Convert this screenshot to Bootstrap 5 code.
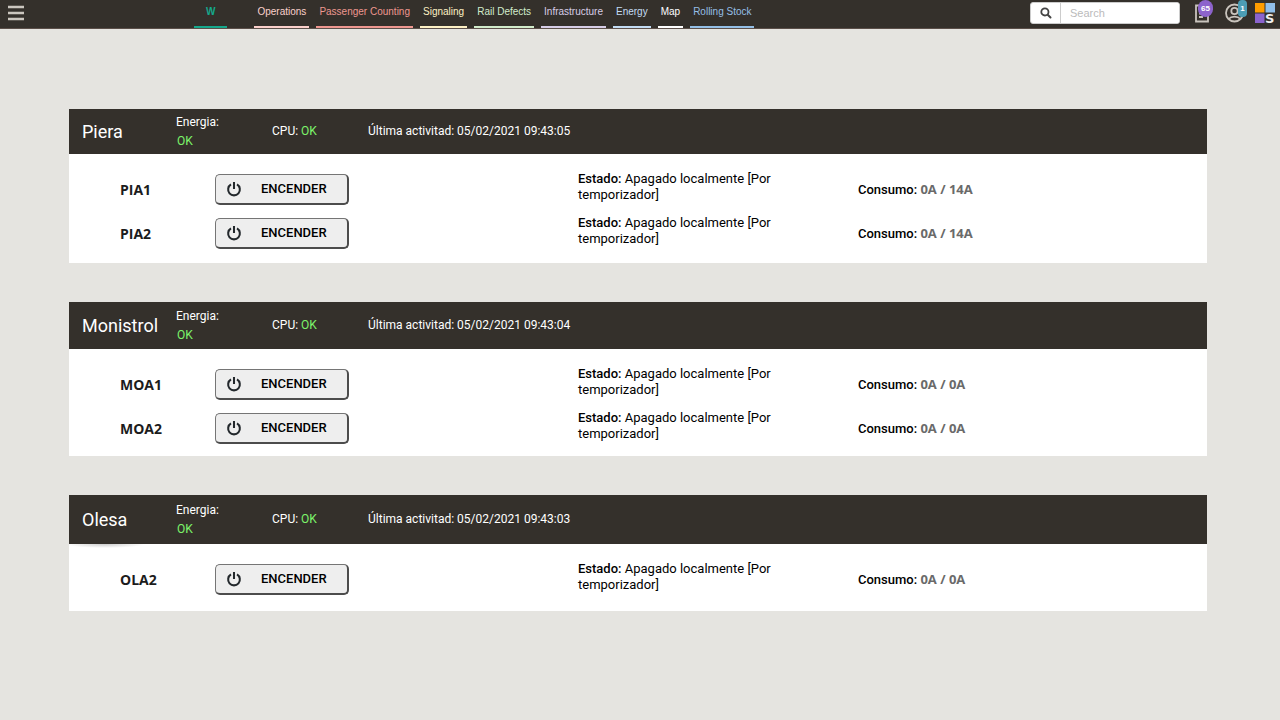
<!DOCTYPE html>
<html lang="es">
<head>
<meta charset="utf-8">
<meta name="viewport" content="width=device-width, initial-scale=1">
<title>Energy</title>
<link rel="stylesheet" href="https://cdn.jsdelivr.net/npm/bootstrap@5.3.0/dist/css/bootstrap.min.css">
<style>
:root { --ink: #34302b; }
body { background: #e5e4e0; font-family: Roboto, sans-serif; font-size: 13px; line-height: 16px; color: #000; }
.topbar { background: var(--ink); height: 29px; border-bottom: 1px solid #5b4f49; font-family: "Liberation Sans", Arial, sans-serif; padding-left: 8px; padding-right: 5px; }
.menu-btn { width: 16px; height: 24px; }
.main-tabs { margin-left: 170px; gap: 7px; font-size: 10px; line-height: 12px; }
.main-tabs a { display: block; height: 28px; padding: 6px 3px 0; border-bottom: 2px solid currentColor; color: var(--tab); text-decoration: none; white-space: nowrap; }
.main-tabs a.home-tab { padding-left: 12px; padding-right: 12px; margin-right: 20px; font-weight: 700; }
.t-teal { --tab: #15a88c; } .t-pink { --tab: #fbd0cb; } .t-red { --tab: #ee9790; }
.t-yellow { --tab: #fdf0c4; } .t-green { --tab: #d2eccb; } .t-lilac { --tab: #d6cde6; }
.t-pale { --tab: #c3dcf3; } .t-white { --tab: #fff; } .t-blue { --tab: #94bfe6; }
.search-box { width: 150px; height: 22px; margin: 2px 15px 0 0; background: #fff; border: 1px solid #ccc; border-radius: 3px; overflow: hidden; }
.search-box button { width: 30px; border-right: 1px solid #ccc !important; }
.search-box input { min-width: 0; font-size: 11px; line-height: 20px; padding: 0 9px; outline: 0; }
.search-box input::placeholder { color: #bbb; opacity: 1; }
.tool { height: 28px; color: #c9c4bd; }
.tool svg, .menu-btn svg, .search-box svg, .power svg { display: block; }
.count { top: 0; height: 17px; font-size: 8px; line-height: 17px; color: #fff; text-align: center; font-weight: 700; }
.count-purple { left: 3px; width: 15px; background: #8c63cc; border-radius: 8px; }
.count-teal { left: 13px; width: 9px; background: #4c9db4; border-radius: 4px; }
main { padding: 80px 73px 40px 69px; gap: 39px; }
.station { background: #fff; }
.station-head { display: grid; grid-template-columns: 94px 96px 96px 1fr; align-items: center; padding-left: 13px; background: var(--ink); color: #fff; font-size: 12px; line-height: 19px; }
.station-head h2 { font-size: 18px; line-height: 24px; font-weight: 400; margin: 0; }
.station-head .d-block { padding-left: 1px; }
.h-short { height: 45px; } .h-mid { height: 47px; } .h-tall { height: 49px; }
.ok { color: #7df36a; }
.station-body { padding: 20px 0 12px 51px; }
.end-14 { padding-bottom: 14px; } .end-16 { padding-bottom: 16px; }
.units { gap: 13px; }
.unit { display: grid; grid-template: 31px / 95fr 363fr 280fr 349fr; align-items: center; }
.unit-name { font: 700 14px/20px "Open Sans", sans-serif; color: #1c1c1c; }
.power { width: 134px; height: 31px; padding: 0 0 0 10px; background: #eee; border: solid; border-width: 1px 2px 2px 1px; border-color: #757575 #4c4c4c #4c4c4c #757575; border-radius: 5px; font-size: 13px; font-weight: 500; color: #000; }
.power span { margin-left: 19px; }
.state { max-width: 210px; padding-bottom: 6px; }
.state b, .load b { font-weight: 500; }
.amps { font: 700 13px/16px "Open Sans", sans-serif; color: #6a6a6a; }
.shade { background-image: radial-gradient(ellipse 40px 4px at 36px 0, #ccc, transparent); background-repeat: no-repeat; }
</style>
</head>
<body>
<svg class="d-none" aria-hidden="true">
  <symbol id="power" viewBox="0 0 18 18"><path d="M5.6 3.9A6.6 6.6 0 1 0 12.4 3.9M9 1V9" fill="none" stroke="#23282c" stroke-width="2.3"/></symbol>
</svg>
<header class="topbar d-flex align-items-start">
  <button class="menu-btn btn p-0 border-0 rounded-0" aria-label="Menu"><svg width="16" height="24" viewBox="0 0 16 24"><path d="M0 7H16M0 13H16M0 19H16" stroke="#cbc6bf" stroke-width="2.6"/></svg></button>
  <nav class="main-tabs d-flex">
    <a class="t-teal home-tab" href="#">W</a>
    <a class="t-pink" href="#">Operations</a>
    <a class="t-red" href="#">Passenger Counting</a>
    <a class="t-yellow" href="#">Signaling</a>
    <a class="t-green" href="#">Rail Defects</a>
    <a class="t-lilac" href="#">Infrastructure</a>
    <a class="t-pale" href="#">Energy</a>
    <a class="t-white" href="#">Map</a>
    <a class="t-blue" href="#">Rolling Stock</a>
  </nav>
  <form class="search-box d-flex ms-auto">
    <button type="button" class="btn p-0 border-0 rounded-0 d-flex align-items-center justify-content-center flex-shrink-0" aria-label="Search"><svg width="12" height="12" viewBox="0 0 12 12"><path d="M7.7 7.7L10.5 10.5" stroke="#444" stroke-width="2" stroke-linecap="round"/><circle cx="4.9" cy="4.9" r="3.6" fill="none" stroke="#444" stroke-width="1.8"/></svg></button>
    <input class="border-0 flex-grow-1" type="text" placeholder="Search" aria-label="Search">
  </form>
  <div class="d-flex">
    <button class="tool btn p-0 border-0 position-relative me-3" aria-label="Reports"><svg width="14" height="28" viewBox="0 0 14 28"><path d="M1 5.5H13V21.5H1ZM4 10H10M4 13.5H10M4 17H8" fill="none" stroke="currentColor" stroke-width="1.8"/></svg><span class="count count-purple position-absolute">65</span></button>
    <button class="tool btn p-0 border-0 position-relative me-2" aria-label="Account"><svg width="22" height="28" viewBox="0 0 22 28"><g fill="none" stroke="currentColor" stroke-width="1.8"><circle cx="9.5" cy="13" r="8.5"/><circle cx="9.5" cy="11" r="3.2"/><path d="M3.5 19C6.5 15.7 12.5 15.7 15.5 19"/></g></svg><span class="count count-teal position-absolute">1</span></button>
    <a class="tool d-block" href="#" aria-label="Home"><svg width="20" height="28" viewBox="0 0 20 28"><path fill="#ff9d00" d="M0 3H9.5V12.5H0Z"/><path fill="#91bfe9" d="M10.5 3H20V12.5H10.5Z"/><path fill="#8b63cd" d="M0 13.5H9.5V23H0Z"/><text x="10" y="23" font-family="DejaVu Sans, sans-serif" font-size="13" font-weight="700" fill="#eee">S</text></svg></a>
  </div>
</header>
<main class="d-flex flex-column">
  <section class="station">
    <div class="station-head h-short"><h2>Piera</h2><div>Energia: <span class="ok d-block">OK</span></div><div>CPU: <span class="ok">OK</span></div><div>Última activitad: 05/02/2021 09:43:05</div></div>
    <div class="station-body end-14 units d-flex flex-column">
      <div class="unit"><div class="unit-name">PIA1</div><button class="power d-flex align-items-center"><svg width="16" height="16"><use href="#power"/></svg><span>ENCENDER</span></button><div class="state"><b>Estado:</b> Apagado localmente [Por temporizador]</div><div class="load"><b>Consumo:</b> <span class="amps">0A / 14A</span></div></div>
      <div class="unit"><div class="unit-name">PIA2</div><button class="power d-flex align-items-center"><svg width="16" height="16"><use href="#power"/></svg><span>ENCENDER</span></button><div class="state"><b>Estado:</b> Apagado localmente [Por temporizador]</div><div class="load"><b>Consumo:</b> <span class="amps">0A / 14A</span></div></div>
    </div>
  </section>
  <section class="station">
    <div class="station-head h-mid"><h2>Monistrol</h2><div>Energia: <span class="ok d-block">OK</span></div><div>CPU: <span class="ok">OK</span></div><div>Última activitad: 05/02/2021 09:43:04</div></div>
    <div class="station-body units d-flex flex-column">
      <div class="unit"><div class="unit-name">MOA1</div><button class="power d-flex align-items-center"><svg width="16" height="16"><use href="#power"/></svg><span>ENCENDER</span></button><div class="state"><b>Estado:</b> Apagado localmente [Por temporizador]</div><div class="load"><b>Consumo:</b> <span class="amps">0A / 0A</span></div></div>
      <div class="unit"><div class="unit-name">MOA2</div><button class="power d-flex align-items-center"><svg width="16" height="16"><use href="#power"/></svg><span>ENCENDER</span></button><div class="state"><b>Estado:</b> Apagado localmente [Por temporizador]</div><div class="load"><b>Consumo:</b> <span class="amps">0A / 0A</span></div></div>
    </div>
  </section>
  <section class="station">
    <div class="station-head h-tall"><h2>Olesa</h2><div>Energia: <span class="ok d-block">OK</span></div><div>CPU: <span class="ok">OK</span></div><div>Última activitad: 05/02/2021 09:43:03</div></div>
    <div class="station-body end-16 shade units d-flex flex-column">
      <div class="unit"><div class="unit-name">OLA2</div><button class="power d-flex align-items-center"><svg width="16" height="16"><use href="#power"/></svg><span>ENCENDER</span></button><div class="state"><b>Estado:</b> Apagado localmente [Por temporizador]</div><div class="load"><b>Consumo:</b> <span class="amps">0A / 0A</span></div></div>
    </div>
  </section>
</main>
<script src="https://cdn.jsdelivr.net/npm/bootstrap@5.3.0/dist/js/bootstrap.bundle.min.js"></script>
</body>
</html>
